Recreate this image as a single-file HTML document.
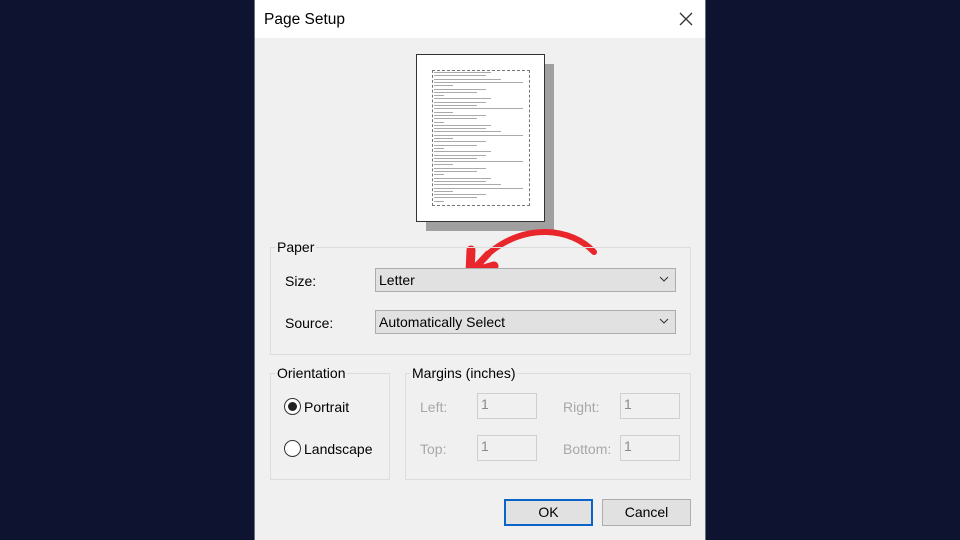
<!DOCTYPE html>
<html><head><style>
*{margin:0;padding:0;box-sizing:border-box}
body{width:960px;height:540px;background:#0e1430;position:relative;overflow:hidden;font-family:"Liberation Sans",sans-serif;color:#000}
.a{position:absolute}
#dlg{left:254px;top:0;width:452px;height:540px;background:#f0f0f0;border-left:1px solid #6b6f80;border-right:1px solid #6b6f80}
#title{left:0;top:0;width:450px;height:38px;background:#fff}
.grp{border:1px solid #dcdcdc}
.lbl{font-size:14px;background:#f0f0f0;padding:0 2px;line-height:16px}
.combo{background:#e1e1e1;border:1px solid #adadad;font-size:14px;line-height:22px;padding-left:3px}
.inp{background:#f0f0f0;border:1px solid #cfcfcf;font-size:14px;color:#8a8a8a;padding-left:3px;line-height:21px}
.dis{font-size:14px;color:#a8a8a8}
.btn{background:#e1e1e1;border:1px solid #adadad;font-size:14px;text-align:center;line-height:25px}
.ln{position:absolute;height:1px;background:#aaa;left:0}
</style></head><body>
<div id="dlg" class="a">
 <div id="title" class="a">
  <div class="a" style="left:9px;top:11px;font-size:15.5px">Page Setup</div>
  <svg class="a" style="left:424px;top:12px" width="14" height="14"><path d="M1 1L13 13M13 1L1 13" stroke="#333" stroke-width="1.3"/></svg>
 </div>
</div>
<div class="a" style="left:426px;top:64px;width:128px;height:167px;background:#a0a0a0"></div>
<div class="a" style="left:416px;top:54px;width:129px;height:168px;background:#fff;border:1px solid #333">
 <div class="a" style="left:15px;top:15px;width:98px;height:136px;border:1px dashed #777"></div>
 <div class="a" id="txt" style="left:17px;top:17px;width:94px;height:130px"></div>
</div>
<svg class="a" style="left:0;top:0" width="960" height="540">
 <path d="M594 252 C572 228 525 222 488 254" stroke="#e8262b" stroke-width="6" fill="none" stroke-linecap="round"/>
 <path d="M471 250 L470 273 L494 266" stroke="#e8262b" stroke-width="9" fill="none" stroke-linejoin="round" stroke-linecap="round"/>
 <path d="M488 254 L474 269" stroke="#e8262b" stroke-width="7" stroke-linecap="round"/>
</svg>
<!-- Paper -->
<div class="a grp" style="left:270px;top:247px;width:421px;height:108px"></div>
<div class="a lbl" style="left:275px;top:239px">Paper</div>
<div class="a" style="left:285px;top:273px;font-size:14px">Size:</div>
<div class="a combo" style="left:375px;top:268px;width:301px;height:24px">Letter</div>
<div class="a" style="left:285px;top:315px;font-size:14px">Source:</div>
<div class="a combo" style="left:375px;top:310px;width:301px;height:24px">Automatically Select</div>
<svg class="a" style="left:659px;top:276px" width="10" height="6"><path d="M1 1L5 5L9 1" stroke="#333" fill="none"/></svg>
<svg class="a" style="left:659px;top:318px" width="10" height="6"><path d="M1 1L5 5L9 1" stroke="#333" fill="none"/></svg>
<!-- Orientation -->
<div class="a grp" style="left:270px;top:373px;width:120px;height:107px"></div>
<div class="a lbl" style="left:275px;top:365px">Orientation</div>
<div class="a" style="left:284px;top:398px;width:17px;height:17px;border:1px solid #333;border-radius:50%;background:#fff"><div class="a" style="left:3px;top:3px;width:9px;height:9px;border-radius:50%;background:#222"></div></div>
<div class="a" style="left:304px;top:399px;font-size:14px">Portrait</div>
<div class="a" style="left:284px;top:440px;width:17px;height:17px;border:1px solid #333;border-radius:50%;background:#fff"></div>
<div class="a" style="left:304px;top:441px;font-size:14px">Landscape</div>
<!-- Margins -->
<div class="a grp" style="left:405px;top:373px;width:286px;height:107px"></div>
<div class="a lbl" style="left:410px;top:365px">Margins (inches)</div>
<div class="a dis" style="left:420px;top:399px">Left:</div>
<div class="a inp" style="left:477px;top:393px;width:60px;height:26px">1</div>
<div class="a dis" style="left:563px;top:399px">Right:</div>
<div class="a inp" style="left:620px;top:393px;width:60px;height:26px">1</div>
<div class="a dis" style="left:420px;top:441px">Top:</div>
<div class="a inp" style="left:477px;top:435px;width:60px;height:26px">1</div>
<div class="a dis" style="left:563px;top:441px">Bottom:</div>
<div class="a inp" style="left:620px;top:435px;width:60px;height:26px">1</div>
<!-- Buttons -->
<div class="a btn" style="left:504px;top:499px;width:89px;height:27px;border:2px solid #0a64c8;line-height:23px">OK</div>
<div class="a btn" style="left:602px;top:499px;width:89px;height:27px">Cancel</div>
<script>
var t=document.getElementById('txt'),w=[60,55,70,94,20,55,45,10,60,55,45,94,20,55,45,10];
for(var i=0;i<40;i++){var d=document.createElement('div');d.className='ln';d.style.top=(i*3.3)+'px';d.style.width=w[i%16]*0.95+'px';t.appendChild(d);}
</script>
</body></html>
